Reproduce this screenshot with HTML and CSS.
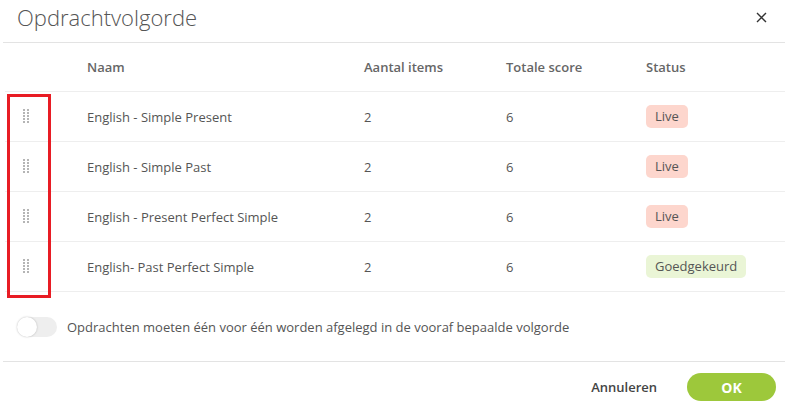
FILE: index.html
```html
<!DOCTYPE html>
<html lang="nl">
<head>
    <meta charset="UTF-8">
    <title>Opdrachtvolgorde</title>
    <link rel="stylesheet" href="styles.css">
</head>
<body>
    <div class="modal">
        <div class="modal-head">
            <h1>Opdrachtvolgorde</h1>
            <svg class="close" width="11" height="11" viewBox="0 0 11 11"><path d="M1 1 L10 10 M10 1 L1 10" stroke="#333" stroke-width="1.4" fill="none"/></svg>
        </div>

        <div class="table">
            <div class="row head">
                <div></div>
                <div>Naam</div>
                <div>Aantal items</div>
                <div>Totale score</div>
                <div>Status</div>
            </div>
            <div class="row">
                <div class="handle"><svg width="7" height="15" viewBox="0 0 7 15"><g fill="#b5b5b5"><rect x="0" y="0" width="2" height="2"/><rect x="4" y="0" width="2" height="2"/><rect x="0" y="3" width="2" height="2"/><rect x="4" y="3" width="2" height="2"/><rect x="0" y="6" width="2" height="2"/><rect x="4" y="6" width="2" height="2"/><rect x="0" y="9" width="2" height="2"/><rect x="4" y="9" width="2" height="2"/><rect x="0" y="12" width="2" height="2"/><rect x="4" y="12" width="2" height="2"/></g></svg></div>
                <div>English - Simple Present</div>
                <div>2</div>
                <div>6</div>
                <div><span class="badge live">Live</span></div>
            </div>
            <div class="row">
                <div class="handle"><svg width="7" height="15" viewBox="0 0 7 15"><g fill="#b5b5b5"><rect x="0" y="0" width="2" height="2"/><rect x="4" y="0" width="2" height="2"/><rect x="0" y="3" width="2" height="2"/><rect x="4" y="3" width="2" height="2"/><rect x="0" y="6" width="2" height="2"/><rect x="4" y="6" width="2" height="2"/><rect x="0" y="9" width="2" height="2"/><rect x="4" y="9" width="2" height="2"/><rect x="0" y="12" width="2" height="2"/><rect x="4" y="12" width="2" height="2"/></g></svg></div>
                <div>English - Simple Past</div>
                <div>2</div>
                <div>6</div>
                <div><span class="badge live">Live</span></div>
            </div>
            <div class="row">
                <div class="handle"><svg width="7" height="15" viewBox="0 0 7 15"><g fill="#b5b5b5"><rect x="0" y="0" width="2" height="2"/><rect x="4" y="0" width="2" height="2"/><rect x="0" y="3" width="2" height="2"/><rect x="4" y="3" width="2" height="2"/><rect x="0" y="6" width="2" height="2"/><rect x="4" y="6" width="2" height="2"/><rect x="0" y="9" width="2" height="2"/><rect x="4" y="9" width="2" height="2"/><rect x="0" y="12" width="2" height="2"/><rect x="4" y="12" width="2" height="2"/></g></svg></div>
                <div>English - Present Perfect Simple</div>
                <div>2</div>
                <div>6</div>
                <div><span class="badge live">Live</span></div>
            </div>
            <div class="row">
                <div class="handle"><svg width="7" height="15" viewBox="0 0 7 15"><g fill="#b5b5b5"><rect x="0" y="0" width="2" height="2"/><rect x="4" y="0" width="2" height="2"/><rect x="0" y="3" width="2" height="2"/><rect x="4" y="3" width="2" height="2"/><rect x="0" y="6" width="2" height="2"/><rect x="4" y="6" width="2" height="2"/><rect x="0" y="9" width="2" height="2"/><rect x="4" y="9" width="2" height="2"/><rect x="0" y="12" width="2" height="2"/><rect x="4" y="12" width="2" height="2"/></g></svg></div>
                <div>English- Past Perfect Simple</div>
                <div>2</div>
                <div>6</div>
                <div><span class="badge approved">Goedgekeurd</span></div>
            </div>
            <div class="marker"></div>
        </div>

        <div class="option">
            <span class="toggle"><span class="knob"></span></span>
            <span class="option-label">Opdrachten moeten één voor één worden afgelegd in de vooraf bepaalde volgorde</span>
        </div>

        <div class="modal-foot">
            <button class="btn-link">Annuleren</button>
            <button class="btn-ok">OK</button>
        </div>
    </div>
</body>
</html>
```

FILE: styles.css
```css
body {
    margin: 0;
    background: #fff;
    font-family: 'Open Sans', sans-serif;
    color: #555;
}
.modal {
    width: 785px;
    height: 406px;
    overflow: hidden;
}
.modal-head {
    margin-left: 3px;
    height: 42px;
    padding: 0 18px 0 14px;
    display: flex;
    justify-content: space-between;
    align-items: center;
    border-bottom: 1px solid #e3e3e3;
}
h1 {
    margin: 0;
    font-size: 22px;
    font-weight: 300;
    font-stretch: 89%;
    color: #555;
    position: relative;
    top: -4px;
}
.close { position: relative; top: -4px; }

.table { margin-left: 5px; position: relative; }
.row {
    display: grid;
    grid-template-columns: 82px 277px 142px 140px 1fr;
    align-items: center;
    height: 49px;
    border-bottom: 1px solid #eeeeee;
    font-size: 13px;
}
.row.head {
    height: 48px;
    font-weight: 600;
    color: #666;
}
.handle { padding-left: 18px; display: flex; align-items: center; }
.badge {
    display: inline-block;
    padding: 2px 9px 3px;
    border-radius: 5px;
    color: #555;
}
.badge.live { background: #fdd6cd; }
.badge.approved { background: #eaf5d6; }
.marker {
    position: absolute;
    left: 2px;
    top: 51px;
    width: 38px;
    height: 198px;
    border: 3px solid #e81c24;
}

.option {
    height: 69px;
    display: flex;
    align-items: center;
    gap: 10px;
    border-bottom: 1px solid #e3e3e3;
    margin-left: 3px;
    padding-left: 14px;
}
.toggle {
    width: 40px;
    height: 20px;
    border-radius: 10px;
    background: #eeeeee;
    position: relative;
}
.knob {
    position: absolute;
    left: 0;
    top: 0;
    width: 20px;
    height: 20px;
    border-radius: 50%;
    background: #fff;
    box-shadow: 0 0 2px rgba(0, 0, 0, 0.25);
}
.option-label { font-size: 13px; color: #555; }

.modal-foot {
    display: flex;
    justify-content: flex-end;
    align-items: center;
    gap: 30px;
    padding: 11px 9px 0 0;
}
button { font-family: 'Open Sans', sans-serif; border: none; cursor: pointer; }
.btn-link { background: none; font-size: 13px; font-weight: 600; color: #444; padding: 0; }
.btn-ok {
    width: 89px;
    height: 28px;
    border-radius: 14px;
    background: #9dc83b;
    color: #fff;
    font-size: 14px;
    font-weight: 700;
}
```
